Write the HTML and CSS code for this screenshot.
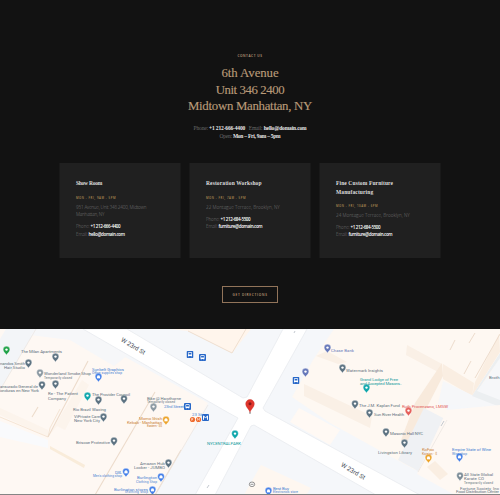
FILE: index.html
```html
<!DOCTYPE html>
<html lang="en">
<head>
<meta charset="utf-8">
<title>Contact Us</title>
<link rel="stylesheet" href="styles.css">
</head>
<body>
<main class="contact">
  <p class="eyebrow">CONTACT US</p>
  <h1 class="address"><span class="a1">6th Avenue</span><br><span class="a2">Unit 346 2400</span><br><span class="a3">Midtown Manhattan, NY</span></h1>
  <div class="summary">
    <p class="s1">Phone: <b>+1 212-666-4400</b> &nbsp; Email: <b>hello@domain.com</b></p>
    <p class="s2">Open: <b>Mon – Fri, 9am – 5pm</b></p>
  </div>
  <section class="cards">
    <article class="card">
      <h2 class="short">Show Room</h2>
      <p class="hours">MON - FRI, 9AM - 5PM</p>
      <p class="street first">951 Avenue, Unit 346 2400, Midtown<br>Manhattan, NY</p>
      <p class="reach">Phone: <b>+1 212-666-4400</b><br>Email: <b>hello@domain.com</b></p>
    </article>
    <article class="card">
      <h2>Restoration Workshop</h2>
      <p class="hours">MON - FRI, 7AM - 5PM</p>
      <p class="street">22 Montague Terrace, Brooklyn, NY</p>
      <p class="reach">Phone: <b>+1 212-684-5500</b><br>Email: <b>furniture@domain.com</b></p>
    </article>
    <article class="card">
      <h2>Fine Custom Furniture<br>Manufacturing</h2>
      <p class="hours">MON - FRI, 10AM - 6PM</p>
      <p class="street">24 Montague Terrace, Brooklyn, NY</p>
      <p class="reach">Phone: <b>+1 212-684-5500</b><br>Email: <b>furniture@domain.com</b></p>
    </article>
  </section>
  <a class="button">GET DIRECTIONS</a>
</main>
<section class="map">
<svg viewBox="0 329 500 165" width="500" height="165">
  <defs>
    <symbol id="pin" viewBox="0 0 8 10" overflow="visible"><path d="M4 9.3C3.6 7.6.7 6.2.7 3.6a3.3 3.3 0 0 1 6.6 0C7.3 6.2 4.4 7.6 4 9.3Z" stroke="#fff" stroke-width=".3"/><circle cx="4" cy="3.6" r="1.2" fill="#fff"/></symbol>
    <symbol id="bagpin" viewBox="0 0 8 10" overflow="visible"><path d="M4 9.3C3.6 7.6.7 6.2.7 3.6a3.3 3.3 0 0 1 6.6 0C7.3 6.2 4.4 7.6 4 9.3Z" stroke="#fff" stroke-width=".3"/><path d="M2.5 3.2h3v2H2.5ZM3.1 3.2V2.5h1.8v.7" fill="#fff" stroke="#fff" stroke-width=".2"/></symbol>
    <symbol id="bus" viewBox="0 0 7 7"><rect width="7" height="7" rx="1" fill="#2868c8"/><rect x="1.5" y="1.3" width="4" height="3.8" rx=".5" fill="#fff"/><path d="M2.1 2h2.8v1.5H2.1Z" fill="#2868c8"/><path d="M1.8 5.7h.8M4.4 5.7h.8" stroke="#fff" stroke-width=".6"/></symbol>
  </defs>
  <rect y="329" width="500" height="166" fill="#f5f7fa"/>
  <!-- building blocks -->
  <path d="M0 329H36L0 388Z" fill="#f3f5f8"/>
  <path d="M36 329 0 390V495H155L181 452 208 403 82 333 72 334Z" fill="#fef8f3"/>
  <path d="M36 329H83L128 355 114 366 70 340 30 335Z" fill="#f6f7f9"/>
  <path d="M0 415 48 437 82 380 89 385 65 430 57 426 48 437V430L0 408Z" fill="#fbeee1" opacity=".4"/>
  <path d="M0 417 48 437 50 428 60 409" fill="none" stroke="#f5e5d5" stroke-width="1"/>
  <path d="M48 437 88 361M95 495 155 392M155 495 181 450M32 417 38 407" stroke="#eddccc" stroke-width="1.1"/>
  <path d="M50 446 85 465 84 468 50 449Z" fill="#f9ecda"/>
  <path d="M0 421 48 440 48 448 0 437Z" fill="#f9fafc"/>
  <path d="M170 329H251L232 353 188 331Z" fill="#fff5ec"/>
  <path d="M188 331 232 353 246 329" fill="none" stroke="#efdfd0"/>
  <path d="M0 329H6L0 339Z" fill="#fef8f3"/>
  <path d="M313 360 334 329H500V361L474 395 440 402 450 413 415 470 330 423 292 397Z" fill="#fef8f2"/>
  <path d="M304 384 372 416 370 428 304 396ZM407 345 442 364 438 372 406 355ZM316 356 327 351 347 362 338 364Z" fill="#faf0e6"/>
  <path d="M442 363 415 403 401 440 411 444 425 411 443 376Z" fill="#f8eadc"/>
  <path d="M443 364 474 383 472 396 443 379ZM499 334 475 382 472 396 500 352Z" fill="#faeee2"/>
  <path d="M455 340 450 350M471 361 464 374M475 333 469 343M500 334 475 378" stroke="#eddccd"/>
  <path d="M443 381 476 397 500 357V415L457 405 438 404Z" fill="#f6f7f9"/>
  <path d="M500 353 472 396 500 407V400L477 391 500 358Z" fill="#eceff1"/>
  <path d="M424 408 447 420 418 471 398 460Z" fill="#eff1f4"/>
  <path d="M447 410 500 405V495H455L417 474Z" fill="#fef8f3"/>
  <path d="M427 467 440 480 448 474 435 461Z" fill="#faeee2"/>
  <path d="M261 465 311 488 306 495H244Z" fill="#fef7f0"/>
  <path d="M299 408 340 430 330 445 290 422Z" fill="#fff9f4"/>
  <path d="M36 329 0 390M155 495 208 405M447 420 418 472" stroke="#e9e4df" stroke-width=".7" fill="none"/>
  <!-- streets -->
  <path d="M83 329H127L243 398 247 397 283 329H307L263 408 265 411 420 495H376L254 425 251 426 215 495H195L238 418 227 412Z" fill="#fff" stroke="#e9ebef" stroke-width=".8"/>
  <g font-family="Roboto, sans-serif" font-size="6.200" fill="#454c54"><text transform="translate(120.500 341) rotate(31)" textLength="27">W 23rd St</text><text transform="translate(340.500 466) rotate(31)" textLength="27">W 23rd St</text></g>
  <!-- grey places -->
  <g fill="#5d7382"><use href="#pin" x="51.5" y="353" width="8" height="10"/><use href="#pin" x="24.5" y="359" width="8" height="10"/><use href="#pin" x="36" y="369" width="8" height="10" opacity=".7"/><use href="#pin" x="38" y="381" width="8" height="10"/><use href="#pin" x="51.5" y="380" width="8" height="10"/><use href="#pin" x="94.5" y="396" width="8" height="10"/><use href="#pin" x="120" y="395" width="8" height="10"/><use href="#pin" x="99.5" y="413" width="8" height="10"/><use href="#pin" x="110" y="437" width="8" height="10"/><use href="#pin" x="149.5" y="403" width="8" height="10" opacity=".7"/><use href="#pin" x="164.5" y="459" width="8" height="10"/><use href="#pin" x="338.5" y="364" width="8" height="10"/><use href="#pin" x="351" y="400" width="8" height="10"/><use href="#pin" x="365.5" y="409" width="8" height="10"/><use href="#pin" x="382" y="428" width="8" height="10"/><use href="#pin" x="400.500" y="439" width="8" height="10"/><use href="#pin" x="456" y="472" width="8" height="10" opacity=".8"/></g>
  <g fill="#6678ba"><use href="#pin" x="323.500" y="344" width="8" height="10"/><use href="#pin" x="301.500" y="368" width="8" height="10"/></g>
  <g fill="#437ee8"><use href="#bagpin" x="94.500" y="373" width="8" height="10"/><use href="#bagpin" x="122" y="468" width="8" height="10"/><use href="#bagpin" x="157" y="473" width="8" height="10"/><use href="#bagpin" x="148.500" y="486" width="8" height="10"/><use href="#bagpin" x="264.500" y="487" width="8" height="10"/><use href="#bagpin" x="455.500" y="453" width="8" height="10"/></g>
  <g fill="#10a7ac"><use href="#pin" x="83.500" y="392" width="8" height="10"/><use href="#pin" x="362.500" y="384" width="8" height="10"/><use href="#pin" x="231" y="430" width="8" height="10"/></g>
  <g fill="#eda329"><use href="#bagpin" x="162" y="416" width="8" height="10"/><use href="#bagpin" x="424.500" y="454" width="8" height="10"/></g>
  <use href="#pin" x="2.500" y="346" width="8" height="10" fill="#21a34a"/><use href="#pin" x="404.500" y="407" width="8" height="10" fill="#e5605c"/>
  <!-- transit -->
  <use href="#bus" x="186.500" y="351" width="7" height="7"/><use href="#bus" x="199" y="354" width="7" height="7"/><use href="#bus" x="184" y="403" width="7" height="7"/><use href="#bus" x="292.500" y="377" width="7" height="7"/>
  <rect x="202" y="414" width="7" height="7" rx="1" fill="#2868c8"/><path d="M203.500 419.800v-4l2 2.300 2-2.300v4" fill="none" stroke="#fff" stroke-width="1"/>
  <circle cx="192.500" cy="419.500" r="2.600" fill="#ef6b2f"/><circle cx="198.500" cy="419.500" r="2.600" fill="#ef6b2f"/><path d="M191.700 418.200v2.600M191.700 418.400h1.500M191.700 419.500h1.300M197.500 420.600v-2.300l1 1.200 1-1.200v2.300" fill="none" stroke="#fff" stroke-width=".5"/>
  <!-- place labels -->
  <g class="labels">
    <g fill="#61717d">
      <text x="21" y="353.300" textLength="41">The Milan Apartments</text><text x="0" y="364.500" textLength="25">nandos Smith</text><text x="4" y="368.500" textLength="21">Hair Studio</text>
      <text x="44" y="375" textLength="47">Wonderland Smoke Shop</text><text class="tiny" x="44" y="378.500" textLength="28">Temporarily closed</text>
      <text x="0" y="387.500" textLength="38">ansurado General de</text><text x="0" y="391.500" textLength="39">onduras en New York</text>
      <text x="48" y="395" textLength="30">Re - The Patient</text><text x="48" y="399.500" textLength="18">Company</text><text x="92" y="395.500" textLength="38">The Provider Council</text>
      <text x="73" y="410.500" textLength="33">Rio Brazil Waxing</text><text x="74" y="418" textLength="26">ViPrivate Care</text><text x="74" y="422" textLength="26">New York City</text><text x="76" y="443.500" textLength="34">Briscoe Protective</text>
      <text x="147" y="399.500" textLength="34">Bike @ Hawthorne</text><text class="tiny" x="147" y="403" textLength="28">Temporarily closed</text><text x="140" y="464.500" textLength="25">Amazon Hub</text><text x="134" y="468.500" textLength="31">Locker - JUMBO</text>
      <text x="346" y="371.500" textLength="37">Watermark Insights</text><text x="359" y="407.300" textLength="41">The J.M. Kaplan Fund</text><text x="374" y="416" textLength="30">Sun River Health</text><text x="390" y="435" textLength="33">Masonic Hall NYC</text><text x="378" y="453.500" textLength="34">Livingston Library</text>
      <text x="489" y="378.500" textLength="10.500">Broth</text><text x="464" y="475.500" textLength="29">All State Global</text><text x="464" y="479.500" textLength="20">Karate CO</text><text class="tiny" x="464" y="483.500" textLength="29">Temporarily closed</text><text x="460" y="489.700" textLength="39">Fortune Society, Inc</text><text x="456" y="493.200" textLength="43">Food Distribution Center</text>
    </g>
    <g fill="#6678ba"><text x="331" y="351.500" textLength="23">Chase Bank</text></g>
    <g fill="#437ed2"><text x="92" y="370.500" textLength="32">Sunbelt Graphics</text><text class="tiny" x="92" y="374" textLength="30">Office supplies shop</text><text x="164" y="408" textLength="20">23rd Street</text><text x="192" y="416" textLength="10">23 St</text><text x="115" y="473.500" textLength="7">DXL</text><text class="tiny" x="93" y="477" textLength="29">Men's clothing shop</text><text x="137" y="479" textLength="20">Burlington</text><text class="tiny" x="136" y="482.500" textLength="21">Clothing Shop</text><text x="114" y="490.800" textLength="34">Burlington stores</text><text class="tiny" x="125" y="493.300" textLength="23">Clothing shop</text><text x="273" y="490.300" textLength="16">Best Buy</text><text class="tiny" x="273" y="493.300" textLength="25">Electronics store</text><text x="452" y="451" textLength="39">Empire State of Wine</text><text class="tiny" x="452" y="454.500" textLength="15">Wine shop</text></g>
    <g fill="#159ba0"><text x="360" y="380.500" textLength="38">Grand Lodge of Free</text><text x="360" y="385" textLength="42">and Accepted Masons..</text><text x="207" y="444.800" textLength="34">NYCENTRALPARK</text></g>
    <g fill="#cc8439"><text x="139" y="419.500" textLength="23">Momo Shish</text><text x="127" y="423.500" textLength="35">Kebab - Manhattan</text><text class="tiny" x="147" y="427" textLength="15">Eastern · $$</text><text x="422" y="451" textLength="12">KoFoo</text><text class="tiny" x="422" y="454.500" textLength="15">Korean · $</text></g>
    <text x="402" y="407.700" textLength="46" fill="#de5757">Ruth Provenzano, LMSW</text>
  </g>
  <ellipse cx="252" cy="484.300" rx="2.700" ry="2.300" fill="#fff" stroke="#777" stroke-width=".8"/><path d="M250.500 484.300h3" stroke="#777" stroke-width=".8"/>
  <path d="M441 426 444 421M207 488l2-3M294 333l1-2" stroke="#c4c9d0" stroke-width="1"/>
  <path d="M250 412.500C249.300 409 245.700 407.500 245.700 403.800a4.300 4.300 0 0 1 8.600 0c0 3.700-3.600 5.200-4.300 8.700Z" fill="#e0352c" stroke="#c22d25" stroke-width=".4"/><circle cx="250" cy="403.800" r="1.500" fill="#871817"/><circle cx="250" cy="413" r=".7" fill="#555"/>
</svg>
</section>
</body>
</html>
```
FILE: styles.css
```css
* { box-sizing: border-box; }
body { margin: 0; width: 500px; height: 495px; overflow: hidden; background: #121212; font-family: "Open Sans", sans-serif; }
h1, h2, p { margin: 0; font-weight: 400; }
.contact { height: 329px; padding-top: 53px; display: flex; flex-direction: column; align-items: center; }
.eyebrow { font: 600 3.2px/6px "Open Sans", sans-serif; letter-spacing: .55px; color: #c5a683; }
.address { margin-top: 6px; font: 12.8px/16.5px "Liberation Serif", serif; color: #b99a78; text-align: center; white-space: nowrap; -webkit-text-stroke: .15px #b99a78; }
.a1 { letter-spacing: -.05px; }
.a2 { letter-spacing: -.4px; }
.a3 { letter-spacing: -.27px; }
.summary { margin-top: 9.500px; font: 5.500px/8.200px "Liberation Serif", serif; letter-spacing: -.16px; color: #6a6a6a; text-align: center; white-space: nowrap; }
.s2 { letter-spacing: -.25px; }
b { color: #e8e8e8; font-weight: 600; }
.cards { display: grid; grid-template-columns: repeat(3, 121px); gap: 9px; height: 95px; margin-top: 23px; transform: translateX(-.5px); }
.card { background: #202020; padding: 16px 0 0 17px; white-space: nowrap; }
.card h2 { font: 700 5.500px/8.200px "Liberation Serif", serif; letter-spacing: .12px; color: #dedede; }
.card .short { letter-spacing: -.25px; }
.hours { margin-top: 7.300px; font-size: 2.800px; line-height: 6px; font-weight: 600; letter-spacing: .54px; color: #b08e55; }
.street { margin-top: 2.700px; font-size: 4.600px; line-height: 7.700px; font-weight: 300; letter-spacing: .04px; color: #7a7a7a; }
.first { letter-spacing: -.17px; }
.reach { margin-top: 4.300px; font-size: 4.500px; line-height: 7.500px; font-weight: 300; letter-spacing: -.1px; color: #7a7a7a; }
.reach b { font-weight: 600; letter-spacing: -.35px; color: #fff; }
.button { display: flex; align-items: center; justify-content: center; width: 56px; height: 17px; margin-top: 28px; border: 1px solid #92745a; color: #c3a17d; font-size: 3.200px; font-weight: 600; letter-spacing: .7px; }
.map { height: 166px; border-bottom: 1px solid #858585; background: #f5f7fa; }
.map svg { display: block; }
.labels { font-family: Roboto, sans-serif; font-size: 4.300px; }
.tiny { font-size: 3.200px; }
```
